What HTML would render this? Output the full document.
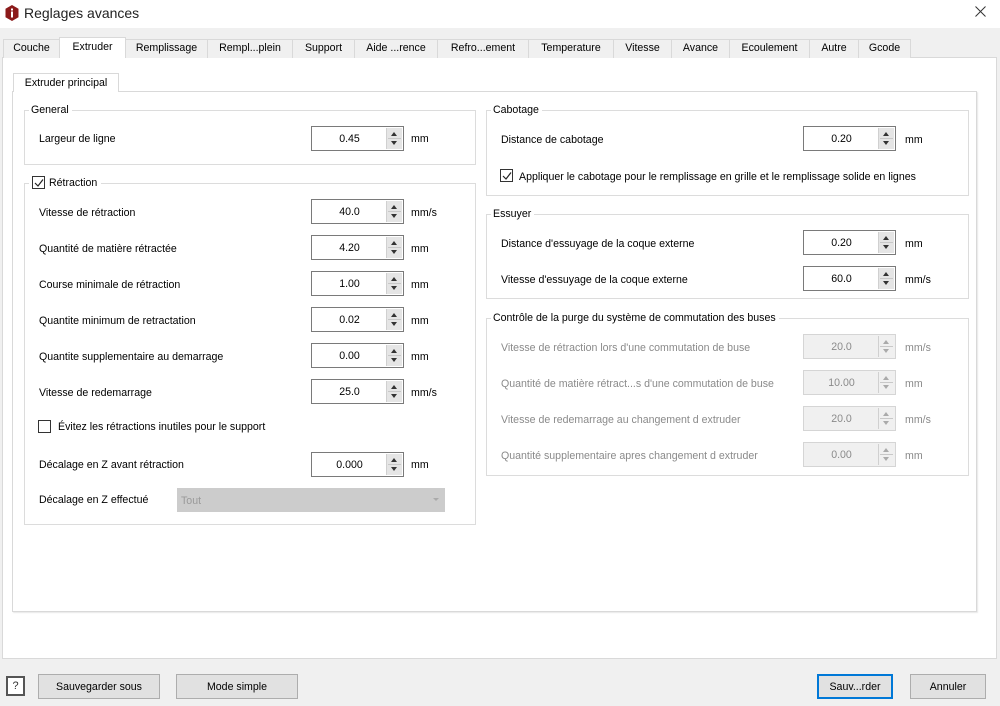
<!DOCTYPE html>
<html><head><meta charset="utf-8"><style>
*{box-sizing:border-box;margin:0;padding:0}
body{width:1000px;height:706px;background:#f0f0f0;font-family:"Liberation Sans",sans-serif;font-size:10.6px;color:#000;position:relative;overflow:hidden}
.a{position:absolute}
.t{position:absolute;white-space:nowrap;line-height:16px}
.tab{position:absolute;top:39px;height:19px;border:1px solid #d9d9d9;border-bottom:none;background:#f0f0f0;text-align:center;line-height:17px}
.gb{position:absolute;border:1px solid #dcdcdc}
.gt{position:absolute;background:#fff;padding:0 3px 0 2px;line-height:14px;white-space:nowrap}
.sp{position:absolute;width:93px;height:25px;border:1px solid #7a7a7a;background:#fff}
.sp .v{position:absolute;left:0;top:0;width:75px;height:23px;text-align:center;line-height:25px}
.sp .b{position:absolute;right:1px;top:1px;width:16px;height:21px;background:#e5e5e5;border-left:1px solid #d0d0d0}
.sp .b:before{content:"";position:absolute;left:4px;top:4px;border:3.5px solid transparent;border-bottom:4px solid #333;border-top:none}
.sp .b:after{content:"";position:absolute;left:4px;top:13px;border:3.5px solid transparent;border-top:4px solid #333;border-bottom:none}
.sp .b i{position:absolute;left:1px;right:1px;top:10px;border-top:1px solid #c8c8c8}
.dis{border-color:#d5d5d5;background:#f0f0f0;color:#8a8a8a}
.dis .b{background:#f0f0f0}
.dis .b:before{border-bottom-color:#aaa}.dis .b:after{border-top-color:#aaa}
.g{color:#8a8a8a}
.cb{position:absolute;width:13px;height:13px;border:1px solid #333;background:#fff}
.btn{position:absolute;height:25px;border:1px solid #adadad;background:#e1e1e1;text-align:center;line-height:24px}
</style></head><body>
<div class="a" style="left:0;top:0;width:1000px;height:28px;background:#fff"></div>
<svg class="a" style="left:5px;top:5px" width="14" height="16" viewBox="0 0 14 16"><path d="M7 0L13.5 3.8V12.2L7 16L0.5 12.2V3.8Z" fill="#8b1a1a"/><rect x="6" y="3.5" width="2" height="2" fill="#fff"/><rect x="6" y="6.5" width="2" height="6" fill="#fff"/></svg>
<div class="t" style="left:24px;top:5px;font-size:14px;line-height:16px;color:#222">Reglages avances</div>
<svg class="a" style="left:975px;top:6px" width="11" height="11"><path d="M0.5 0.5L10.5 10.5M10.5 0.5L0.5 10.5" stroke="#333" stroke-width="1"/></svg>

<div class="a" style="left:2px;top:57px;width:995px;height:602px;background:#fff;border:1px solid #d9d9d9"></div>
<div class="tab" style="left:3px;width:57px">Couche</div>
<div class="tab" style="left:59px;width:67px;top:37px;height:21px;background:#fff;border-color:#d9d9d9;line-height:19px;z-index:2">Extruder</div>
<div class="tab" style="left:125px;width:83px">Remplissage</div>
<div class="tab" style="left:207px;width:86px">Rempl...plein</div>
<div class="tab" style="left:292px;width:63px">Support</div>
<div class="tab" style="left:354px;width:84px">Aide ...rence</div>
<div class="tab" style="left:437px;width:92px">Refro...ement</div>
<div class="tab" style="left:528px;width:86px">Temperature</div>
<div class="tab" style="left:613px;width:59px">Vitesse</div>
<div class="tab" style="left:671px;width:59px">Avance</div>
<div class="tab" style="left:729px;width:81px">Ecoulement</div>
<div class="tab" style="left:809px;width:50px">Autre</div>
<div class="tab" style="left:858px;width:53px">Gcode</div>

<div class="a" style="left:12px;top:91px;width:965px;height:521px;border:1px solid #d9d9d9;box-shadow:1px 1px 1px #e8e8e8"></div>
<div class="a" style="left:13px;top:73px;width:106px;height:19px;border:1px solid #d9d9d9;border-bottom:none;background:#fff;text-align:center;line-height:19px">Extruder principal</div>

<div class="gb" style="left:24px;top:110px;width:452px;height:55px"></div>
<div class="gt" style="left:29px;top:103px">General</div>
<div class="t" style="left:39px;top:131px">Largeur de ligne</div>
<div class="sp" style="left:311px;top:126px"><div class="v">0.45</div><div class="b"><i></i></div></div>
<div class="t" style="left:411px;top:131px">mm</div>

<div class="gb" style="left:24px;top:183px;width:452px;height:342px"></div>
<div class="gt" style="left:29px;top:176px;padding-left:3px;padding-right:4px"><span class="cb" style="position:relative;display:inline-block;vertical-align:-3px;margin-right:4px"><svg class="a" style="left:1px;top:1px" width="10" height="10"><path d="M1 5L4 8L9 1.5" stroke="#222" stroke-width="1.2" fill="none"/></svg></span>Rétraction</div>

<div class="t" style="left:39px;top:205px">Vitesse de rétraction</div>
<div class="sp" style="left:311px;top:199px"><div class="v">40.0</div><div class="b"><i></i></div></div>
<div class="t" style="left:411px;top:205px">mm/s</div>
<div class="t" style="left:39px;top:241px">Quantité de matière rétractée</div>
<div class="sp" style="left:311px;top:235px"><div class="v">4.20</div><div class="b"><i></i></div></div>
<div class="t" style="left:411px;top:241px">mm</div>
<div class="t" style="left:39px;top:277px">Course minimale de rétraction</div>
<div class="sp" style="left:311px;top:271px"><div class="v">1.00</div><div class="b"><i></i></div></div>
<div class="t" style="left:411px;top:277px">mm</div>
<div class="t" style="left:39px;top:313px">Quantite minimum de retractation</div>
<div class="sp" style="left:311px;top:307px"><div class="v">0.02</div><div class="b"><i></i></div></div>
<div class="t" style="left:411px;top:313px">mm</div>
<div class="t" style="left:39px;top:349px">Quantite supplementaire au demarrage</div>
<div class="sp" style="left:311px;top:343px"><div class="v">0.00</div><div class="b"><i></i></div></div>
<div class="t" style="left:411px;top:349px">mm</div>
<div class="t" style="left:39px;top:385px">Vitesse de redemarrage</div>
<div class="sp" style="left:311px;top:379px"><div class="v">25.0</div><div class="b"><i></i></div></div>
<div class="t" style="left:411px;top:385px">mm/s</div>
<div class="cb" style="left:38px;top:420px"></div>
<div class="t" style="left:58px;top:419px">Évitez les rétractions inutiles pour le support</div>
<div class="t" style="left:39px;top:457px">Décalage en Z avant rétraction</div>
<div class="sp" style="left:311px;top:452px"><div class="v">0.000</div><div class="b"><i></i></div></div>
<div class="t" style="left:411px;top:457px">mm</div>
<div class="t" style="left:39px;top:492px">Décalage en Z effectué</div>
<div class="a" style="left:177px;top:488px;width:268px;height:24px;background:#ccc;border:1px solid #ccc"></div>
<div class="t g" style="left:181px;top:493px;color:#9a9a9a">Tout</div>
<div class="a" style="left:433px;top:498px;border:3px solid transparent;border-top:3px solid #aaa"></div>

<div class="gb" style="left:486px;top:110px;width:483px;height:86px"></div>
<div class="gt" style="left:491px;top:103px">Cabotage</div>
<div class="t" style="left:501px;top:132px">Distance de cabotage</div>
<div class="sp" style="left:803px;top:126px"><div class="v">0.20</div><div class="b"><i></i></div></div>
<div class="t" style="left:905px;top:132px">mm</div>
<div class="cb" style="left:500px;top:169px"><svg class="a" style="left:1px;top:1px" width="10" height="10"><path d="M1 5L4 8L9 1.5" stroke="#222" stroke-width="1.2" fill="none"/></svg></div>
<div class="t" style="left:519px;top:169px">Appliquer le cabotage pour le remplissage en grille et le remplissage solide en lignes</div>

<div class="gb" style="left:486px;top:214px;width:483px;height:85px"></div>
<div class="gt" style="left:491px;top:207px">Essuyer</div>
<div class="t" style="left:501px;top:236px">Distance d'essuyage de la coque externe</div>
<div class="sp" style="left:803px;top:230px"><div class="v">0.20</div><div class="b"><i></i></div></div>
<div class="t" style="left:905px;top:236px">mm</div>
<div class="t" style="left:501px;top:272px">Vitesse d'essuyage de la coque externe</div>
<div class="sp" style="left:803px;top:266px"><div class="v">60.0</div><div class="b"><i></i></div></div>
<div class="t" style="left:905px;top:272px">mm/s</div>

<div class="gb" style="left:486px;top:318px;width:483px;height:158px"></div>
<div class="gt" style="left:491px;top:311px">Contrôle de la purge du système de commutation des buses</div>
<div class="t g" style="left:501px;top:340px">Vitesse de rétraction lors d'une commutation de buse</div>
<div class="sp dis" style="left:803px;top:334px"><div class="v">20.0</div><div class="b"><i></i></div></div>
<div class="t g" style="left:905px;top:340px">mm/s</div>
<div class="t g" style="left:501px;top:376px">Quantité de matière rétract...s d'une commutation de buse</div>
<div class="sp dis" style="left:803px;top:370px"><div class="v">10.00</div><div class="b"><i></i></div></div>
<div class="t g" style="left:905px;top:376px">mm</div>
<div class="t g" style="left:501px;top:412px">Vitesse de redemarrage au changement d extruder</div>
<div class="sp dis" style="left:803px;top:406px"><div class="v">20.0</div><div class="b"><i></i></div></div>
<div class="t g" style="left:905px;top:412px">mm/s</div>
<div class="t g" style="left:501px;top:448px">Quantité supplementaire apres changement d extruder</div>
<div class="sp dis" style="left:803px;top:442px"><div class="v">0.00</div><div class="b"><i></i></div></div>
<div class="t g" style="left:905px;top:448px">mm</div>

<div class="a" style="left:6px;top:676px;width:19px;height:20px;border:2px solid #555;background:#fff;text-align:center;line-height:16px;font-size:11px;color:#333">?</div>
<div class="btn" style="left:38px;top:674px;width:122px">Sauvegarder sous</div>
<div class="btn" style="left:176px;top:674px;width:122px">Mode simple</div>
<div class="btn" style="left:817px;top:674px;width:76px;border:1px solid #0078d7;box-shadow:inset 0 0 0 1px #0078d7">Sauv...rder</div>
<div class="btn" style="left:910px;top:674px;width:76px">Annuler</div>
</body></html>
